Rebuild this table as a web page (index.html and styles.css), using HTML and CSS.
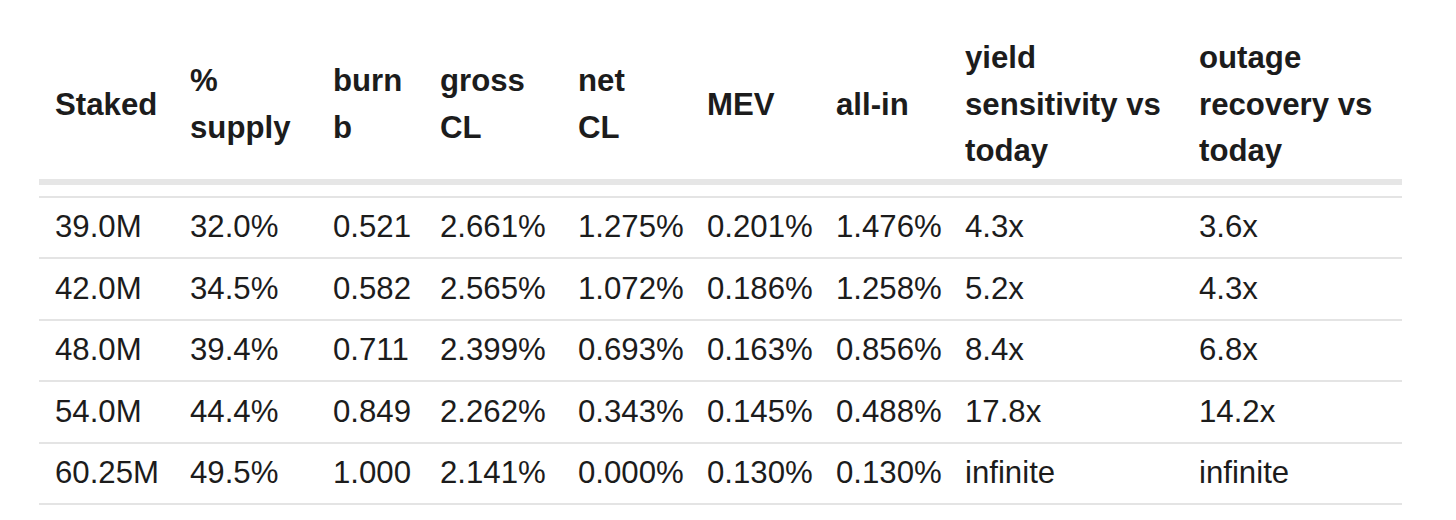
FILE: index.html
```html
<!DOCTYPE html>
<html>
<head>
<meta charset="utf-8">
<link rel="stylesheet" href="styles.css">
</head>
<body>
<div class="wrap">
<table class="data">
  <colgroup>
    <col class="c1"><col class="c2"><col class="c3"><col class="c4"><col class="c5"><col class="c6"><col class="c7"><col class="c8"><col class="c9">
  </colgroup>
  <thead>
    <tr>
      <th>Staked</th>
      <th>%<br>supply</th>
      <th>burn<br>b</th>
      <th>gross<br>CL</th>
      <th>net<br>CL</th>
      <th>MEV</th>
      <th>all-in</th>
      <th>yield<br>sensitivity vs<br>today</th>
      <th>outage<br>recovery vs<br>today</th>
    </tr>
  </thead>
  <tbody>
    <tr class="spacer"><td colspan="9"></td></tr>
    <tr><td>39.0M</td><td>32.0%</td><td>0.521</td><td>2.661%</td><td>1.275%</td><td>0.201%</td><td>1.476%</td><td>4.3x</td><td>3.6x</td></tr>
    <tr><td>42.0M</td><td>34.5%</td><td>0.582</td><td>2.565%</td><td>1.072%</td><td>0.186%</td><td>1.258%</td><td>5.2x</td><td>4.3x</td></tr>
    <tr><td>48.0M</td><td>39.4%</td><td>0.711</td><td>2.399%</td><td>0.693%</td><td>0.163%</td><td>0.856%</td><td>8.4x</td><td>6.8x</td></tr>
    <tr><td>54.0M</td><td>44.4%</td><td>0.849</td><td>2.262%</td><td>0.343%</td><td>0.145%</td><td>0.488%</td><td>17.8x</td><td>14.2x</td></tr>
    <tr class="last"><td>60.25M</td><td>49.5%</td><td>1.000</td><td>2.141%</td><td>0.000%</td><td>0.130%</td><td>0.130%</td><td>infinite</td><td>infinite</td></tr>
  </tbody>
</table>
</div>
</body>
</html>
```

FILE: styles.css
```css
html, body {
  margin: 0;
  padding: 0;
  background: #ffffff;
}

.wrap {
  padding: 31px 0 0 39px;
}

.data {
  border-collapse: separate;
  border-spacing: 0;
  table-layout: fixed;
  width: 1363px;
  font-family: "Liberation Sans", Arial, Helvetica, sans-serif;
  font-size: 31.2px;
  line-height: 46.5px;
  color: #1c1c1c;
}

.c1 { width: 135px; }
.c2 { width: 143px; }
.c3 { width: 107px; }
.c4 { width: 138px; }
.c5 { width: 129px; }
.c6 { width: 129px; }
.c7 { width: 129px; }
.c8 { width: 234px; }
.c9 { width: 219px; }

.data th {
  font-weight: 700;
  text-align: left;
  vertical-align: middle;
  padding: 4px 8px 4px 16px;
  border-bottom: 6px solid #e6e6e6;
  white-space: nowrap;
}

.data td {
  text-align: left;
  vertical-align: middle;
  padding: 6.5px 0 6.5px 16px;
  border-top: 2px solid #e4e4e4;
  white-space: nowrap;
}

.data tr.spacer td {
  height: 11px;
  padding: 0;
  border: none;
  line-height: 0;
}

.data tr.last td {
  border-bottom: 2px solid #e4e4e4;
}
```
